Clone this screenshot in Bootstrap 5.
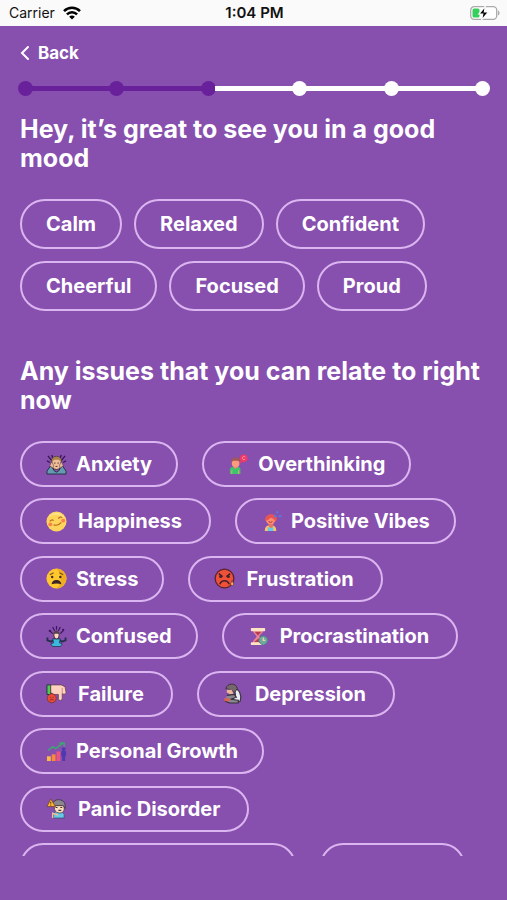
<!DOCTYPE html>
<html lang="en">
<head>
<meta charset="utf-8">
<meta name="viewport" content="width=device-width, initial-scale=1">
<title>Mood check-in</title>
<link href="https://cdn.jsdelivr.net/npm/bootstrap@5.3.0/dist/css/bootstrap.min.css" rel="stylesheet">
<style>
body{background:#874fae;color:#fff;font-family:Inter,"Liberation Sans",sans-serif}
.statusbar{background:#fafafa;color:#111;height:26px;font-size:14px;line-height:26px;padding:0 7px 0 9px}
.statusbar>*{flex:1 1 0}
.clock{font-size:15px;font-weight:600}
.back-link{font-size:17px;line-height:24px;font-weight:700;padding:15px 20px 0;gap:8px}
.steps{padding:16px 17px 0 18px}
.dot{width:15px;height:15px;border-radius:50%;background:#fff;flex:none}
.bar{height:5px;background:#fff;margin:0 -1px}
.dot.done,.bar.done{background:#68219b}
.scroller{min-height:0;margin-bottom:44px;overflow-y:auto;scrollbar-width:none;padding:19px 20px 0}
.scroller::-webkit-scrollbar{display:none}
.question{font-size:25px;line-height:29px;font-weight:700;margin:0}
.moods{gap:12px;margin:26px 0 46px}
.issues{column-gap:24px;min-height:448px;align-content:space-between;margin-top:26px}
.chip{--bs-btn-color:#fff;--bs-btn-border-color:#dbb5f0;--bs-btn-border-width:2px;--bs-btn-border-radius:25px;--bs-btn-font-size:20px;--bs-btn-font-weight:700;--bs-btn-line-height:26px;--bs-btn-padding-x:24px;--bs-btn-padding-y:10px;--bs-btn-hover-color:#fff;--bs-btn-hover-bg:#68219b;--bs-btn-hover-border-color:#dbb5f0}
.issues .chip{height:46px;display:flex;align-items:center;gap:9px;--bs-btn-padding-y:0px}
.issues .chip-roomy{gap:11px;padding-right:27px}
.chip svg{width:21px;height:21px;flex:none}
.chip-wide{width:276px}
.chip-mid{width:145px}
</style>
<script src="https://cdn.jsdelivr.net/npm/bootstrap@5.3.0/dist/js/bootstrap.bundle.min.js" defer></script>
</head>
<body>
<div class="vh-100 d-flex flex-column overflow-hidden">
<header class="statusbar d-flex align-items-center">
<div class="d-flex align-items-center gap-2"><span>Carrier</span>
<svg width="18" height="14" viewBox="0 0 18 14" fill="none" stroke="#000" stroke-width="2.5" aria-hidden="true"><path d="M1 5.200C5.500.7 12.500.7 17 5.200M3.900 8.300c2.900-2.900 7.300-2.900 10.200 0"/><path d="M9 13.600 6.200 10.700c1.600-1.500 4-1.500 5.600 0z" fill="#000" stroke="none"/></svg></div>
<div class="clock text-center">1:04 PM</div>
<div class="d-flex justify-content-end"><svg width="30" height="16" viewBox="0 0 30 16" aria-hidden="true"><rect x=".7" y="1.700" width="26" height="12.600" rx="3.500" fill="#fff" stroke="#aaa" stroke-width="1.300"/><path d="M28 5.500c2 .8 2 4.200 0 5z" fill="#aaa"/><rect x="2.500" y="3.500" width="7" height="9" rx="1.500" fill="#35cf5b"/><path d="M15.500 1 8.800 9h4l-1.300 6.200L18.500 7h-4.200z" fill="#000" stroke="#fafafa" stroke-width="1.200"/></svg></div>
</header>
<nav class="d-flex"><a href="#" class="back-link d-inline-flex align-items-center text-white text-decoration-none"><svg width="10" height="16" viewBox="0 0 10 16" fill="none" stroke="#fff" stroke-width="2" stroke-linecap="round" aria-hidden="true"><path d="M8 2 2 8l6 6"/></svg>Back</a></nav>
<div class="steps d-flex align-items-center" role="progressbar" aria-label="Progress" aria-valuenow="3" aria-valuemin="1" aria-valuemax="6">
<span class="dot done"></span><span class="bar done flex-fill"></span><span class="dot done"></span><span class="bar done flex-fill"></span><span class="dot done"></span><span class="bar flex-fill"></span><span class="dot"></span><span class="bar flex-fill"></span><span class="dot"></span><span class="bar flex-fill"></span><span class="dot"></span>
</div>
<main class="scroller flex-grow-1">
<h1 class="question">Hey, it’s great to see you in a good mood</h1>
<div class="moods d-flex flex-wrap">
<button type="button" class="btn chip">Calm</button><button type="button" class="btn chip">Relaxed</button><button type="button" class="btn chip">Confident</button><button type="button" class="btn chip">Cheerful</button><button type="button" class="btn chip">Focused</button><button type="button" class="btn chip">Proud</button>
</div>
<h2 class="question">Any issues that you can relate to right now</h2>
<div class="issues d-flex flex-wrap">
<button type="button" class="btn chip"><svg viewBox="0 0 22 22" aria-hidden="true"><path d="M2 2l4 5M1 7l3 2M6 1l1 3M20 2l-4 5M21 7l-3 2M16 1l-1 3" stroke="#35124f" stroke-width="1.300"/><path d="M6 7c0-6 10-6 10 0v4c0 7-10 7-10 0z" fill="#efbd98" stroke="#443036"/><path d="M6 8c0-7 10-7 10 0l-3-2H9z" fill="#a98250"/><path d="M1 21V18l4-6 4 6 2 1 2-1 4-6 4 6v3z" fill="#659bb0" stroke="#263047"/><path d="m4 12 2-4 2 4-1 3zm14 0-2-4-2 4 1 3z" fill="#edb795" stroke="#443036" stroke-width=".5"/><path d="M8.500 9.500h1.500m2 0h1.500M10 13h2" stroke="#542b31"/></svg>Anxiety</button>
<button type="button" class="btn chip"><svg viewBox="0 0 22 22" aria-hidden="true"><path d="M2 21v-5c0-2 3-3 6-3s5 1 5 3v5z" fill="#3bc66b"/><path d="M6 11h4v3l-2 2-2-2z" fill="#e7856c"/><rect x="4" y="5" width="8" height="9" rx="4" fill="#fa9b7e"/><path d="M3.500 10V7c0-4 8-5 9-1v3l-2-2H5z" fill="#a35758"/><circle cx="16.500" cy="4.500" r="4" fill="#ef3968"/><path d="m13 7-1 3 4-2z" fill="#ef3968"/><path d="M18 3c-3-2-4 3-1 3l1-1" fill="none" stroke="#ff9aac"/><path d="M4 17v4M11 17v4" stroke="#efa07b"/></svg>Overthinking</button>
<button type="button" class="btn chip chip-roomy"><svg viewBox="0 0 22 22" aria-hidden="true"><circle cx="11" cy="11" r="10.500" fill="#ffd45b"/><path d="M3 6c2-5 13-7 17 2-4-4-11-6-17-2z" fill="#ffe38a"/><circle cx="4.500" cy="14" r="2" fill="#ff7e4d"/><circle cx="18" cy="10" r="2" fill="#ff7e4d"/><path d="M4 11c1-2 3-2 4-1m5-2c1-2 3-2 4-1M8 14.500c3 1 6 0 8-2.500" fill="none" stroke="#b56c24" stroke-width="1.200"/></svg>Happiness</button>
<button type="button" class="btn chip"><svg viewBox="0 0 22 22" aria-hidden="true"><path d="M4 21c0-5 3-6 6-6s6 1 6 6z" fill="#ffc65c"/><path d="M7 17h6v4H7z" fill="#64c9ed"/><path d="M8 12h5v4l-2.500 2L8 16z" fill="#e87564"/><circle cx="10" cy="9" r="5" fill="#ff8c70"/><path d="M4 10c0-8 11-9 13-2l-2 4c0-3-2-4-5-5-2 2-3 3-6 3z" fill="#e65458"/><path d="m17 0 1 2h-2zm-2 4 1 2h-2zm5 0 1.500 2h-3z" fill="#587ae0" stroke="#587ae0"/><path d="M8 11q2 2 4 0" fill="none" stroke="#9d353f"/></svg>Positive Vibes</button>
<button type="button" class="btn chip"><svg viewBox="0 0 22 22" aria-hidden="true"><circle cx="11" cy="11" r="10.500" fill="#ffc82e"/><path d="M11 .5a10.500 10.500 0 0 1 0 21c6-6 6-15 0-21z" fill="#efad24"/><path d="m4 7 4-2m6 0 4 2" stroke="#805316" stroke-width="1.300"/><circle cx="6.500" cy="9.500" r="1.300" fill="#482c18"/><circle cx="15" cy="9.500" r="1.300" fill="#482c18"/><path d="M6 17c0-6 10-6 10 0-3-1-7-1-10 0z" fill="#3b2527"/></svg>Stress</button>
<button type="button" class="btn chip chip-roomy"><svg viewBox="0 0 22 22" aria-hidden="true"><circle cx="11" cy="11" r="9.800" fill="#ef5038" stroke="#592630" stroke-width="1.400"/><path d="m5 6 4 3m8-3-4 3M6 17c2-5 8-5 10 0" fill="none" stroke="#41212c" stroke-width="1.600"/><circle cx="7" cy="9" r="1.600" fill="#41212c"/><circle cx="15" cy="9" r="1.600" fill="#41212c"/><path d="m19 13 1.500 3.500c0 2.500-3 2.500-3 0z" fill="#ffb158" stroke="#592630" stroke-width=".6"/></svg>Frustration</button>
<button type="button" class="btn chip"><svg viewBox="0 0 22 22" aria-hidden="true"><path d="m4 5 3 3M7 1l2 4M18 5l-3 3M15 1l-2 4M11 0v4" stroke="#3c165a" stroke-width="1.200"/><circle cx="4" cy="5" r="1.200" fill="#3c165a"/><circle cx="18" cy="4" r="1.200" fill="#3c165a"/><path d="M1.500 12v3l4 1.500 3-2.500h5l3 2.500 4-1.500v-3" fill="none" stroke="#23304e" stroke-width="2"/><path d="M7 13.500h8l-1 4 3 1.500-2 2.500H7L5 19l3-1.500z" fill="#39b9dc" stroke="#23304e" stroke-width=".8"/><ellipse cx="11" cy="9.500" rx="2.800" ry="4" fill="#ffdbc0" stroke="#412940"/><path d="M8 8c0-4 6-4 6 0z" fill="#57424c"/></svg>Confused</button>
<button type="button" class="btn chip chip-roomy"><svg viewBox="0 0 22 22" aria-hidden="true"><path d="M5 4h11c0 4-4 5-4 7s4 3 4 7H5c0-4 4-5 4-7S5 8 5 4z" fill="#eb8595"/><path d="M7 6h7l-3.500 4zM6 17l5-4 4 4z" fill="#b53c51"/><rect x="3" y="2" width="15" height="3.500" rx="1" fill="#ffe4c4"/><rect x="3" y="17" width="14" height="3" rx="1" fill="#ffe4c4"/><circle cx="16" cy="15" r="4.500" fill="#70a9a0" stroke="#4d8387"/><path d="M16 12v3h2" fill="none" stroke="#f2d6a8" stroke-width="1.200"/></svg>Procrastination</button>
<button type="button" class="btn chip chip-roomy"><svg viewBox="0 0 22 22" aria-hidden="true"><path d="M1 2h4v10H1z" fill="#4bce50" stroke="#263044"/><path d="M5 2h11l4 2 1 6c0 2-3 2-4 1v5c0 3-4 3-4 0v-4H8l-3-2z" fill="#ffd2bf" stroke="#674047" stroke-width=".8"/><path d="M17 5v6" stroke="#c98b84"/><circle cx="6" cy="16" r="4.700" fill="#ed4b39" stroke="#76322f" stroke-width=".8"/><path d="M4 18q2-2 4 0M4 15h1m2 0h1" fill="none" stroke="#642421" stroke-width=".8"/></svg>Failure</button>
<button type="button" class="btn chip chip-roomy"><svg viewBox="0 0 22 22" aria-hidden="true"><path d="M12 6c5 0 8 7 6 13l-6 1-1-4 2-4z" fill="#e9edf0" stroke="#37303b" stroke-width="1.200"/><path d="M3 6c1-6 11-7 12 0l-3 4-4-3z" fill="#77666c" stroke="#37303b"/><path d="M4 7h5l2 4-3 1-4-2z" fill="#eab795"/><path d="m4 13 8-1 2 3-6 2 8 1v3H7l-5-2" fill="#8b8790" stroke="#37303b" stroke-width="1.200"/><path d="M1 16h6v3H2z" fill="#dc624d"/></svg>Depression</button>
<button type="button" class="btn chip"><svg viewBox="0 0 22 22" aria-hidden="true"><path d="M1 16h4v5H1z" fill="#ffb941"/><path d="M6 14h4v7H6z" fill="#fb883d"/><path d="M11 11h4v10h-4z" fill="#f0527b"/><path d="M16 12c0-3 5-3 5 0v4h-1v5h-3v-5h-1z" fill="#5039b0"/><circle cx="18.500" cy="8.500" r="2" fill="#5039b0"/><path d="m2 10 5-4 3 2 8-6m-4 0h5v4" fill="none" stroke="#3aaa70" stroke-width="1.500"/></svg>Personal Growth</button>
<button type="button" class="btn chip chip-roomy"><svg viewBox="0 0 22 22" aria-hidden="true"><path d="M8 21v-5l3-2h5l3 3v4z" fill="#65cae8" stroke="#395269" stroke-width=".8"/><path d="M8 6h11v6c0 5-9 5-10 0z" fill="#ffdfbd" stroke="#473843" stroke-width=".8"/><path d="M7 7c0-7 12-7 13 0v4l-2-3H9z" fill="#8b8790" stroke="#473843"/><path d="M10 10h2m3 0h2m-4 3h3" stroke="#3f3036" stroke-width="1.200"/><path d="m5 1 5 8H1z" fill="#ffb22c" stroke="#70442d" stroke-width=".8"/><path d="M5 4v2m0 1v1" stroke="#47301e"/><path d="M7 21v-5l6 2" fill="none" stroke="#f0bd9d" stroke-width="1.500"/></svg>Panic Disorder</button>
<button type="button" class="btn chip chip-wide" aria-label="More issues"></button>
<button type="button" class="btn chip chip-mid" aria-label="Other"></button>
</div>
</main>
</div>
</body>
</html>
